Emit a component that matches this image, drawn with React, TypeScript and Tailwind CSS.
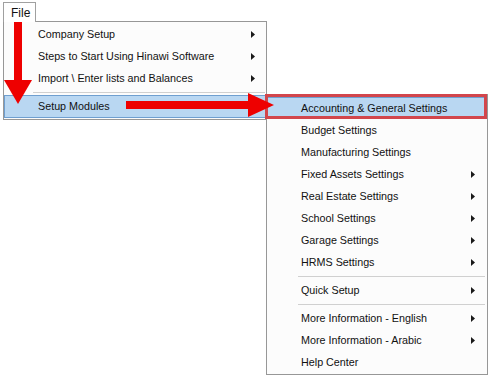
import React from 'react';

type Item = { label: string; sub?: boolean; sep?: boolean };

const fileItems: Item[] = [
  { label: 'Company Setup', sub: true },
  { label: 'Steps to Start Using Hinawi Software', sub: true },
  { label: 'Import \\ Enter lists and Balances', sub: true },
];

const setupItems: Item[] = [
  { label: 'Budget Settings' },
  { label: 'Manufacturing Settings' },
  { label: 'Fixed Assets Settings', sub: true },
  { label: 'Real Estate Settings', sub: true },
  { label: 'School Settings', sub: true },
  { label: 'Garage Settings', sub: true },
  { label: 'HRMS Settings', sub: true },
  { label: '', sep: true },
  { label: 'Quick Setup', sub: true },
  { label: '', sep: true },
  { label: 'More Information - English', sub: true },
  { label: 'More Information - Arabic', sub: true },
  { label: 'Help Center' },
];

const SubArrow = () => (
  <svg width="4" height="7" viewBox="0 0 4 7" className="shrink-0">
    <path d="M0 0L4 3.5L0 7Z" fill="#1a1a1a" />
  </svg>
);

const MenuRow = ({ item, pr }: { item: Item; pr: string }) => (
  <div className={`flex h-[22px] items-center justify-between pl-[34px] ${pr}`}>
    <span>{item.label}</span>
    {item.sub && <SubArrow />}
  </div>
);

export default function App() {
  return (
    <div
      className="relative h-[376px] w-[493px] overflow-hidden bg-white text-[10.75px] text-[#111]"
      style={{ fontFamily: '"Liberation Sans", Arial, sans-serif' }}
    >
      {/* File tab */}
      <div className="relative z-10 ml-[3px] mt-[2px] flex h-[20px] w-[33px] items-center border-x border-t border-[#a0a0a0] bg-white pl-[7px] text-[12px]">
        File
      </div>

      {/* File menu */}
      <div className="-mt-px ml-[3px] w-[264px] border border-[#979797] bg-[#fcfcfc] pt-px pb-px">
        {fileItems.map((it) => (
          <MenuRow key={it.label} item={it} pr="pr-[11px]" />
        ))}
        <div className="flex h-[6px] items-center pl-[29px] pr-px">
          <div className="w-full border-t border-[#d0d0d0]" />
        </div>
        <div className="flex h-[23px] items-center border border-[#6f9fd0] bg-[#b9d7f2] pl-[33px]">
          Setup Modules
        </div>
      </div>

      {/* Setup Modules submenu */}
      <div className="absolute left-[266px] top-[94px] w-[222px] border border-[#979797] bg-[#fcfcfc] pt-[2px] pb-px">
        <div className="flex h-[22px] items-center border border-[#6f9fd0] bg-[#b9d7f2] pl-[33px]">
          Accounting &amp; General Settings
        </div>
        {setupItems.map((it, i) =>
          it.sep ? (
            <div key={i} className="flex h-[6px] items-center pl-[31px] pr-[2px]">
              <div className="w-full border-t border-[#d0d0d0]" />
            </div>
          ) : (
            <MenuRow key={it.label} item={it} pr="pr-[12px]" />
          )
        )}
      </div>

      {/* red annotation box */}
      <div className="absolute left-[265px] top-[94px] h-[25px] w-[222px] border-[3px] border-[#d2464c]" />

      {/* red annotation arrows */}
      <svg className="pointer-events-none absolute left-0 top-0" width="493" height="376" viewBox="0 0 493 376">
        <rect x="14" y="22" width="8" height="60" fill="#ee0000" />
        <path d="M4 80L32 80L18 104Z" fill="#ee0000" />
        <rect x="126" y="101" width="124" height="8" fill="#ee0000" />
        <path d="M248 93L248 117L274 105Z" fill="#ee0000" />
      </svg>
    </div>
  );
}
